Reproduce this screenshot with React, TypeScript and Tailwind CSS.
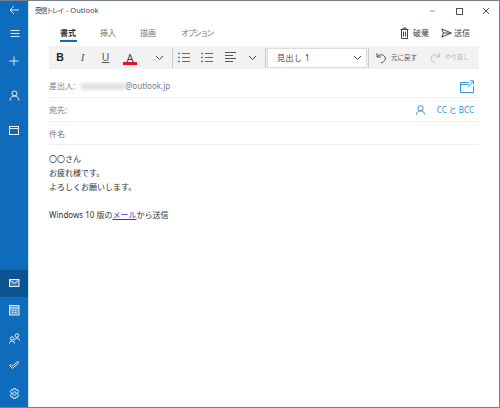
import React from "react";

const font = { fontFamily: '"Noto Sans", "Noto Sans CJK JP", sans-serif' };

function S({ children, w = 14, h = 14, c = "currentColor", sw = 1 }: { children: React.ReactNode; w?: number; h?: number; c?: string; sw?: number }) {
  return (
    <svg className="shrink-0" width={w} height={h} viewBox={`0 0 ${w} ${h}`} fill="none" stroke={c} strokeWidth={sw}>
      {children}
    </svg>
  );
}

function Rail({ children, active }: { children: React.ReactNode; active?: boolean }) {
  return <div className={`h-[27.5px] flex items-center justify-center ${active ? "bg-[#0b5491]" : ""}`}>{children}</div>;
}

function Sep() {
  return <div className="w-px h-[20px] bg-[#c9c9c9] shrink-0" />;
}

function Chevron({ c = "#444" }: { c?: string }) {
  return (
    <S w={9} h={6} c={c}>
      <path d="M1 1l3.500 3.500L8 1" />
    </S>
  );
}

function Field({ label, right, children, h, pt }: { label: string; right?: React.ReactNode; children?: React.ReactNode; h: string; pt: string }) {
  return (
    <div className={`${h} ${pt} flex items-center border-b border-[#eeeeee] text-[8px] text-[#7a7a7a] mr-[20px] pr-[5px]`}>
      <span>{label}</span>
      {children}
      <div className="ml-auto flex items-center">{right}</div>
    </div>
  );
}

export default function App() {
  return (
    <div style={font} className="w-[500px] h-[408px] flex flex-col bg-white overflow-hidden border-t border-b border-r border-[#74808c]">
      <div className="flex flex-1 min-h-0">
        <aside className="w-[29px] shrink-0 bg-[#0f6cbd] border-r border-[#cfe4f5] flex flex-col text-white">
          <div className="h-[18px] flex items-center justify-center">
            <S w={10} h={10} c="#dbe9f6">
              <path d="M1 5h9M5 1L1 5l4 4" />
            </S>
          </div>
          <div className="h-[28px] flex items-center justify-center">
            <S w={11} h={9} c="#dbe9f6">
              <path d="M1.500 1.500h9M1.500 4.500h9M1.500 7.500h9" />
            </S>
          </div>
          <div className="h-[28px] flex items-center justify-center">
            <S w={10} h={10} c="#dbe9f6">
              <path d="M5 .5v9M.5 5h9" />
            </S>
          </div>
          <div className="h-[41px] flex items-center justify-center">
            <S w={11} h={11} c="#f0f6fb">
              <circle cx="5.500" cy="3.500" r="2.500" />
              <path d="M1 10.500c.3-3 2-4.500 4.500-4.500s4.200 1.500 4.500 4.500" />
            </S>
          </div>
          <div className="h-[28px] flex items-center justify-center">
            <S w={10} h={9} c="#e8f1f9">
              <rect x=".5" y=".5" width="9" height="8" />
              <path d="M.5 2.500h9" />
            </S>
          </div>
          <div className="mt-auto">
            <Rail active>
              <S w={11} h={9} c="#eef4fa">
                <rect x=".5" y=".5" width="9.500" height="7" fill="#3c7fb5" />
                <path d="M.5 1l5 3.500L10 1" />
              </S>
            </Rail>
            <Rail>
              <S w={11} h={11} c="#dbe9f6">
                <rect x=".5" y=".5" width="9.500" height="9.500" fill="#5c9bd0" />
                <path d="M.5 3h9.500M3 5.500h1.500M6 5.500h1.500M3 7.500h1.500M6 7.500h1.500" />
              </S>
            </Rail>
            <Rail>
              <S w={11} h={11} c="#e8f1f9">
                <circle cx="8" cy="2.500" r="1.800" />
                <path d="M5.500 7.500c.4-1.500 1.300-2.300 2.500-2.300s2.300.8 2.500 2.300" />
                <circle cx="3" cy="5.500" r="1.700" />
                <path d="M.5 10.500c.2-1.700 1.100-2.500 2.500-2.500s2.300.8 2.500 2.500" />
              </S>
            </Rail>
            <Rail>
              <S w={11} h={9} c="#e8f1f9">
                <path d="M.5 4.500L3.500 7.500L10 1.500L8.500.5L3.500 5L2 3.500z" />
              </S>
            </Rail>
            <Rail>
              <S w={11} h={11} c="#e8f1f9">
                <circle cx="5.500" cy="5.500" r="1.700" />
                <path d="M4.300.7h2.400l.4 1.400 1.400-.4 1.200 2-1 1v1.600l1 1-1.200 2-1.400-.4-.4 1.400H4.300l-.4-1.400-1.400.4-1.200-2 1-1V4.700l-1-1 1.200-2 1.400.4z" />
              </S>
            </Rail>
          </div>
        </aside>

        <main className="flex-1 min-w-0 flex flex-col">
          <header className="h-[19px] flex items-center pl-[6px] text-[7.5px] text-[#444]">
            <span className="flex-1 whitespace-nowrap">
              <span className="text-[7px] tracking-[-1.4px] mr-[1px]">受信トレイ</span> - Outlook
            </span>
            <div className="flex items-center gap-[19px] pr-[9px] text-[#666]">
              <S w={7} h={7} c="#999">
                <path d="M1 4h5" />
              </S>
              <S w={8} h={8} c="#555">
                <rect x="1.500" y="1.500" width="6" height="6" />
              </S>
              <S w={8} h={8} c="#555">
                <path d="M1 1l6 6M7 1L1 7" />
              </S>
            </div>
          </header>

          <div className="h-[26px] flex items-center pl-[31px] pr-[29px] text-[8px] text-[#777]">
            <div className="relative font-bold text-[#333] w-[40px]">
              書式
              <div className="absolute left-0 top-[13px] w-[17px] h-[2px] bg-[#0f6cbd]" />
            </div>
            <span className="w-[40px]">挿入</span>
            <span className="w-[41px]">描画</span>
            <span className="tracking-[-1.6px]">オプション</span>
            <div className="ml-auto flex items-center text-[#444]">
              <S w={9} h={12} c="#444">
                <path d="M.5 2.500h8M3 2.500V1h3v1.500M1.500 2.500v9h6v-9M3.500 4.500v5M5.500 4.500v5" />
              </S>
              <span className="ml-[4px] mr-[12px]">破棄</span>
              <S w={11} h={10} c="#444">
                <path d="M.8 1l9.500 4L.8 9l1.600-4zM2.400 5h7.900" />
              </S>
              <span className="ml-[2px]">送信</span>
            </div>
          </div>

          <div className="h-[23px] mx-[20px] bg-[#f2f2f2] flex items-center text-[#333]">
            <span className="w-[22px] text-center font-bold text-[10.5px] text-[#222]" style={{ fontFamily: '"Liberation Sans", sans-serif' }}>B</span>
            <span className="w-[23px] text-center italic text-[11px] text-[#555]" style={{ fontFamily: '"Liberation Serif", serif' }}>I</span>
            <span className="w-[23px] text-center underline text-[10.5px] text-[#555]">U</span>
            <div className="w-[26px] flex flex-col items-center leading-none text-[#444] text-[11px] pt-[1px]">
              A
              <div className="w-[14px] h-[3px] bg-[#e81123] -mt-[1px]" />
            </div>
            <div className="w-[29px] pl-[12px] shrink-0"><Chevron /></div>
            <Sep />
            <div className="flex items-center gap-[11px] ml-[5px]">
              {[0, 1, 2].map((i) => (
                <S key={i} w={12} h={11} c={i === 2 ? "#555" : "#666"}>
                  {i < 2 && <path d="M0 1.500h2M0 5.500h2M0 9.500h2" stroke="#3a8fd6" strokeWidth="1.500" />}
                  {i < 2 ? (
                    <path d="M4 1.500h8M4 5.500h8M4 9.500h8" />
                  ) : (
                    <path d="M1 .5h11M1 3.500h8M1 6.500h11M1 9.500h8" />
                  )}
                </S>
              ))}
            </div>
            <div className="ml-[12px] mr-[8px]"><Chevron /></div>
            <Sep />
            <div className="w-[100px] h-[20px] mx-[1px] shrink-0 bg-white border border-[#dcdcdc] flex items-center pl-[9px] pr-[4px] text-[8px] text-[#444]">
              <span className="flex-1 tracking-[0.5px] whitespace-nowrap">見出し 1</span>
              <Chevron />
            </div>
            <Sep />
            <div className="flex items-center ml-[7px] text-[6.5px] text-[#555] whitespace-nowrap">
              <S w={10} h={12} c="#555">
                <path d="M1 1v4h4M1 5c2-3 6.500-3 8 0s-1.500 5-4 6" />
              </S>
              <span className="ml-[5px]">元に戻す</span>
            </div>
            <div className="flex items-center ml-[13px] text-[6px] text-[#b5b5b5] whitespace-nowrap">
              <S w={10} h={12} c="#c0c0c0">
                <path d="M9.500 1v4h-4M9.500 5C7.500 2 3 2 1.500 5s1.500 5 4 6" />
              </S>
              <span className="ml-[5px]">やり直し</span>
            </div>
          </div>

          <div className="ml-[20px] mt-[1px]">
            <Field
              label="差出人:"
              h="h-[28px]"
              pt="pt-[5px]"
              right={
                <S w={14} h={13} c="#3a96dd">
                  <path d="M9 2.500H.5v10h13V6M.5 4.500h8" />
                  <path d="M8 7l5.500-6M10 .8h3.500v3.500" />
                </S>
              }
            >
              <span className="ml-[6px] w-[44px] h-[7px] bg-[#e2e2e2] blur-[1.5px]" />
              <span>@outlook.jp</span>
            </Field>
            <Field
              label="宛先:"
              h="h-[24px]"
              pt="pt-[1px]"
              right={
                <div className="flex items-center text-[#2f8fdc] text-[8px]">
                  <S w={9} h={10} c="#2f8fdc">
                    <circle cx="4.500" cy="3.300" r="2.600" />
                    <path d="M.5 9.500c.2-2.500 1.800-3.700 4-3.700s3.800 1.200 4 3.700" />
                  </S>
                  <span className="ml-[12px]">CC と BCC</span>
                </div>
              }
            />
            <Field label="件名" h="h-[23px]" pt="pt-[1px]" />
          </div>

          <div className="ml-[20px] mt-[7px] text-[8px] leading-[14px] text-[#333]">
            <p>〇〇さん</p>
            <p>お疲れ様です。</p>
            <p>よろしくお願いします。</p>
            <p className="mt-[14px]">
              Windows 10 版の<span className="text-[#3333ee] underline">メール</span>から送信
            </p>
          </div>
        </main>
      </div>
    </div>
  );
}
